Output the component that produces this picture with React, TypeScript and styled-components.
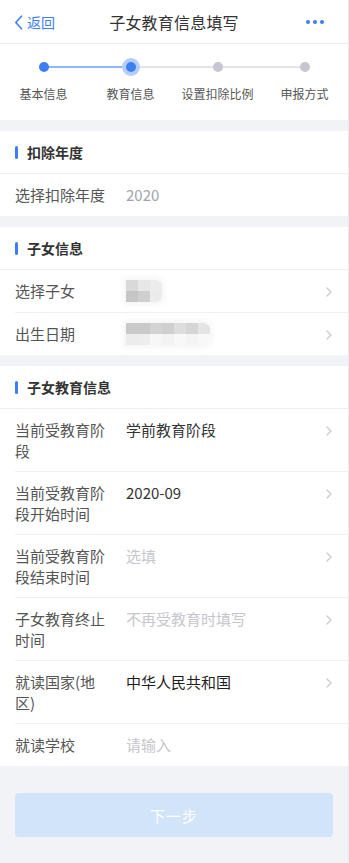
import styled, { createGlobalStyle } from 'styled-components';

const GlobalStyle = createGlobalStyle`
  html, body {
    margin: 0;
    padding: 0;
    background: #f2f3f7;
  }
  body {
    font-family: "Noto Sans CJK SC", "Noto Sans", sans-serif;
    -webkit-font-smoothing: antialiased;
  }
  * {
    box-sizing: border-box;
  }
`;

type Row = {
  label: string;
  value?: string;
  tone?: 'dark' | 'muted' | 'hint' | 'black';
  arrow?: boolean;
  blur?: string[][];
};

type Section = {
  title: string;
  rows: Row[];
};

const steps = ['基本信息', '教育信息', '设置扣除比例', '申报方式'];
const current = 1;

const childBlur = [
  ['#d9d9d9', '#e7e7e7', '#ececec'],
  ['#c6c6c6', '#cfcfcf', '#ebebeb'],
];

const birthBlur = [
  ['#c9c9c9', '#c9c9c9', '#d3d3d3', '#cfcfcf', '#dddddd', '#d5d5d5', '#e4e4e4'],
  ['#ececec', '#ededed', '#f7f7f7', '#f3f3f3', '#f8f8f8', '#f4f4f4', '#f8f8f8'],
];

const sections: Section[] = [
  {
    title: '扣除年度',
    rows: [{ label: '选择扣除年度', value: '2020', tone: 'muted' }],
  },
  {
    title: '子女信息',
    rows: [
      { label: '选择子女', blur: childBlur, arrow: true },
      { label: '出生日期', blur: birthBlur, arrow: true },
    ],
  },
  {
    title: '子女教育信息',
    rows: [
      { label: '当前受教育阶段', value: '学前教育阶段', tone: 'dark', arrow: true },
      { label: '当前受教育阶段开始时间', value: '2020-09', tone: 'dark', arrow: true },
      { label: '当前受教育阶段结束时间', value: '选填', tone: 'hint', arrow: true },
      { label: '子女教育终止时间', value: '不再受教育时填写', tone: 'hint', arrow: true },
      { label: '就读国家(地区)', value: '中华人民共和国', tone: 'black', arrow: true },
      { label: '就读学校', value: '请输入', tone: 'hint' },
    ],
  },
];

export default function App() {
  return (
    <Page>
      <GlobalStyle />
      <NavBar>
        <Back>
          <svg width="9" height="15" viewBox="0 0 9 15">
            <path d="M7.5 1.2 L1.8 7.5 L7.5 13.8" fill="none" stroke="#3d7ef5" strokeWidth="1.6" strokeLinecap="round" strokeLinejoin="round" />
          </svg>
          <span>返回</span>
        </Back>
        <Title>子女教育信息填写</Title>
        <More>
          <i />
          <i />
          <i />
        </More>
      </NavBar>

      <Steps>
        {steps.map((s, i) => (
          <Step key={s} $last={i === steps.length - 1} $done={i < current}>
            <Dot $state={i < current ? 'done' : i === current ? 'active' : 'todo'} />
            <StepLabel>{s}</StepLabel>
          </Step>
        ))}
      </Steps>

      {sections.map(sec => (
        <Card key={sec.title}>
          <CardHead>{sec.title}</CardHead>
          {sec.rows.map((r, i) => (
            <FormRow key={r.label} $first={i === 0}>
              <Label>{r.label}</Label>
              <Value $tone={r.tone ?? 'dark'}>
                {r.blur ? (
                  <Mosaic $cols={r.blur[0].length}>
                    {r.blur.flat().map((c, k) => (
                      <Cell key={k} $c={c} />
                    ))}
                  </Mosaic>
                ) : (
                  r.value
                )}
              </Value>
              {r.arrow && (
                <Arrow>
                  <svg width="6" height="10" viewBox="0 0 6 10">
                    <path d="M1 1 L5 5 L1 9" fill="none" stroke="#c9c9ce" strokeWidth="1.2" strokeLinecap="round" strokeLinejoin="round" />
                  </svg>
                </Arrow>
              )}
            </FormRow>
          ))}
        </Card>
      ))}

      <Footer>
        <NextButton disabled>下一步</NextButton>
      </Footer>
    </Page>
  );
}

const Page = styled.div`
  width: 100%;
  min-height: 863px;
  background: #f2f3f7;
  border-right: 1px solid #e6e9ef;
`;

const NavBar = styled.div`
  height: 44px;
  background: #fff;
  border-bottom: 1px solid #ebebee;
  display: grid;
  grid-template-columns: 80px 1fr 80px;
  align-items: center;
  padding: 0 14px;
`;

const Back = styled.div`
  display: flex;
  align-items: center;
  gap: 4px;
  color: #3d7ef5;
  font-size: 14px;
  svg {
    margin-top: 1px;
  }
`;

const Title = styled.div`
  text-align: center;
  font-size: 16px;
  color: #333;
  letter-spacing: 0.2px;
`;

const More = styled.div`
  display: flex;
  justify-content: flex-end;
  gap: 3px;
  padding-right: 10px;
  i {
    width: 4px;
    height: 4px;
    border-radius: 50%;
    background: #3d7ef5;
  }
`;

const Steps = styled.div`
  background: #fff;
  display: grid;
  grid-template-columns: repeat(4, 1fr);
  height: 76px;
`;

const Step = styled.div<{ $last: boolean; $done: boolean }>`
  position: relative;
  display: flex;
  flex-direction: column;
  align-items: center;
  padding-top: 18px;

  &::after {
    content: '';
    display: ${p => (p.$last ? 'none' : 'block')};
    position: absolute;
    top: 22px;
    left: 50%;
    width: 100%;
    height: 2px;
    background: ${p => (p.$done ? '#8fb6f7' : '#e3e4ea')};
  }
`;

const Dot = styled.span<{ $state: 'done' | 'active' | 'todo' }>`
  position: relative;
  z-index: 1;
  width: 10px;
  height: 10px;
  border-radius: 50%;
  background: ${p => (p.$state === 'todo' ? '#c5c6cf' : '#3d7ef5')};
  box-shadow: ${p => (p.$state === 'active' ? '0 0 0 4px #b3cefa' : 'none')};
`;

const StepLabel = styled.div`
  margin-top: 13px;
  font-size: 12px;
  line-height: 17px;
  color: #555;
  white-space: nowrap;
`;

const Card = styled.div`
  background: #fff;
  margin-top: 11px;
  &:first-of-type {
    margin-top: 12px;
  }
`;

const CardHead = styled.div`
  height: 43px;
  display: flex;
  align-items: center;
  padding-left: 27px;
  position: relative;
  font-size: 14px;
  font-weight: 700;
  color: #333;
  border-bottom: 1px solid #efeff3;

  &::before {
    content: '';
    position: absolute;
    left: 15px;
    top: 15px;
    width: 3px;
    height: 13px;
    border-radius: 1.5px;
    background: #3d7ef5;
  }
`;

const FormRow = styled.div<{ $first: boolean }>`
  display: flex;
  align-items: flex-start;
  margin-left: 15px;
  min-height: ${p => (p.$first ? '42px' : '43px')};
  padding: 11px 16px 10px 0;
  border-top: ${p => (p.$first ? 'none' : '1px solid #f0f0f3')};
`;

const Label = styled.div`
  flex: 0 0 92px;
  margin-right: 19px;
  font-size: 15px;
  line-height: 20.5px;
  color: #555;
`;

const toneColor = {
  dark: '#333',
  black: '#1f1f1f',
  muted: '#a3a3ab',
  hint: '#c6c6cc',
};

const Value = styled.div<{ $tone: keyof typeof toneColor }>`
  flex: 1;
  font-size: 15px;
  line-height: 20.5px;
  color: ${p => toneColor[p.$tone]};
  min-height: 20.5px;
`;

const Mosaic = styled.div<{ $cols: number }>`
  display: grid;
  grid-template-columns: repeat(${p => p.$cols}, 12px);
  grid-auto-rows: 11px;
  width: max-content;
  margin-top: -1px;
  border-radius: 0 6px 6px 0;
  overflow: hidden;
  box-shadow: 0 0 6px 2px rgba(240, 240, 240, 0.8);
`;

const Cell = styled.span<{ $c: string }>`
  background: ${p => p.$c};
`;

const Arrow = styled.div`
  flex: 0 0 auto;
  height: 20.5px;
  display: flex;
  align-items: center;
  padding-top: 1px;
`;

const Footer = styled.div`
  padding: 27px 15px 26px;
`;

const NextButton = styled.button`
  width: 100%;
  height: 44px;
  border: none;
  border-radius: 4px;
  background: #d1e4f9;
  color: #fff;
  font-family: inherit;
  font-size: 15px;
  letter-spacing: 1px;
`;
